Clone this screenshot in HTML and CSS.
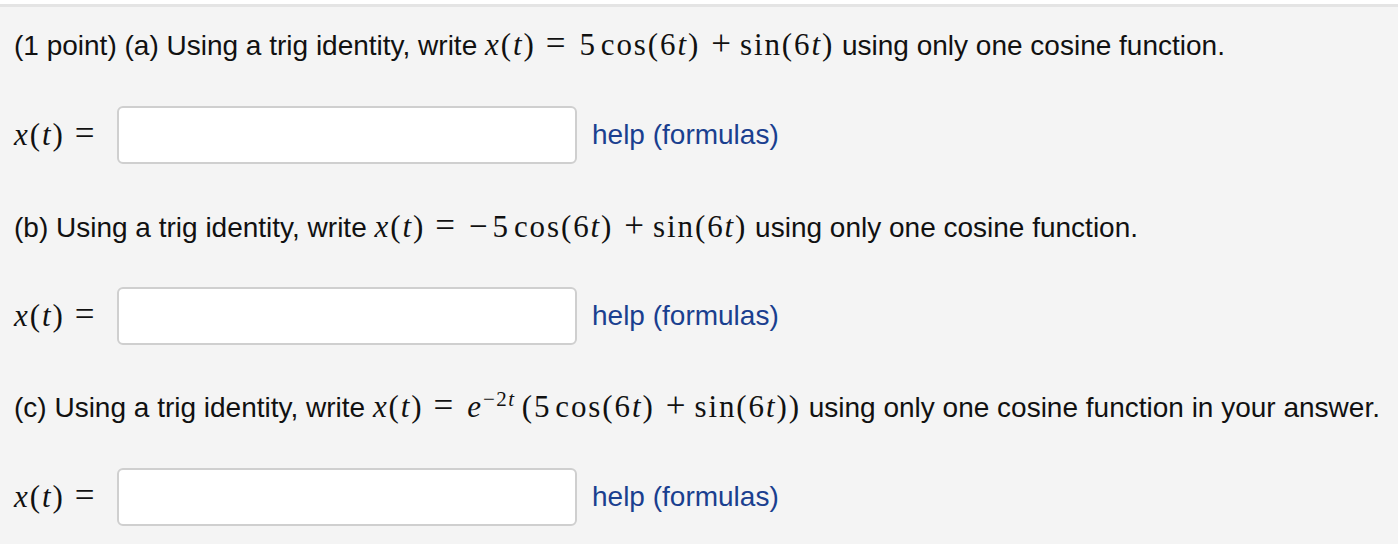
FILE: index.html
```html
<!DOCTYPE html>
<html>
<head>
<meta charset="utf-8">
<link rel="stylesheet" href="styles.css">
</head>
<body>
<div class="topbar"></div>
<div class="panel">
  <p class="q">(1 point) (a) Using a trig identity, write <span class="m"><i>x</i>(<i>t</i>)<span class="rel">=</span>5<span class="th"></span>cos(6<i>t</i>)<span class="bin">+</span>sin(6<i>t</i>)</span> using only one cosine function.</p>
  <div class="ans">
    <span class="m lhs"><i>x</i>(<i>t</i>)<span class="rel">=</span></span>
    <input class="box" type="text">
    <a class="help" href="#">help (formulas)</a>
  </div>
  <p class="q">(b) Using a trig identity, write <span class="m"><i>x</i>(<i>t</i>)<span class="rel">=</span><span class="neg">&minus;</span>5<span class="th"></span>cos(6<i>t</i>)<span class="bin">+</span>sin(6<i>t</i>)</span> using only one cosine function.</p>
  <div class="ans">
    <span class="m lhs"><i>x</i>(<i>t</i>)<span class="rel">=</span></span>
    <input class="box" type="text">
    <a class="help" href="#">help (formulas)</a>
  </div>
  <p class="q">(c) Using a trig identity, write <span class="m"><i>x</i>(<i>t</i>)<span class="rel">=</span><i>e</i><sup>&minus;2<i>t</i></sup>(5<span class="th"></span>cos(6<i>t</i>)<span class="bin">+</span>sin(6<i>t</i>))</span> using only one cosine function in your answer.</p>
  <div class="ans">
    <span class="m lhs"><i>x</i>(<i>t</i>)<span class="rel">=</span></span>
    <input class="box" type="text">
    <a class="help" href="#">help (formulas)</a>
  </div>
</div>
</body>
</html>
```
FILE: styles.css
```css
html, body {
  margin: 0;
  padding: 0;
  background: #f4f4f4;
}
.topbar {
  height: 4px;
  background: #ffffff;
  border-bottom: 3px solid #e4e4e4;
}
.panel {
  background: #f4f4f4;
  padding: 20px 14px 0 14px;
  font-family: "Liberation Sans", Arial, sans-serif;
  font-size: 28px;
  color: #111;
}
.q {
  margin: 0;
  height: 36px;
  line-height: 36px;
  white-space: nowrap;
}
.m {
  font-family: "Liberation Serif", "Times New Roman", serif;
  font-size: 31px;
  letter-spacing: 1.9px;
}
.rel {
  display: inline-block;
  font-size: 35px;
  line-height: 20px;
  letter-spacing: 0;
  margin: 0 14px 0 10px;
}
.bin {
  display: inline-block;
  font-size: 35px;
  line-height: 20px;
  letter-spacing: 0;
  margin: 0 9px 0 11px;
}
.neg {
  display: inline-block;
  font-size: 33px;
  letter-spacing: 0;
  margin-right: 5px;
}
.th {
  display: inline-block;
  width: 4px;
}
.m sup {
  font-size: 21px;
  line-height: 0;
  letter-spacing: 1.5px;
  margin-right: 6px;
}
.ans {
  display: flex;
  align-items: center;
  margin: 43px 0 44px 0;
  height: 58px;
}
.lhs {
  width: 103px;
  white-space: nowrap;
}
.box {
  box-sizing: border-box;
  width: 460px;
  height: 58px;
  border: 2px solid #cfcfcf;
  border-radius: 6px;
  background: #fff;
  margin: 0 15px 0 0;
  padding: 0;
}
.help {
  color: #1a3f8f;
  text-decoration: none;
}
```
